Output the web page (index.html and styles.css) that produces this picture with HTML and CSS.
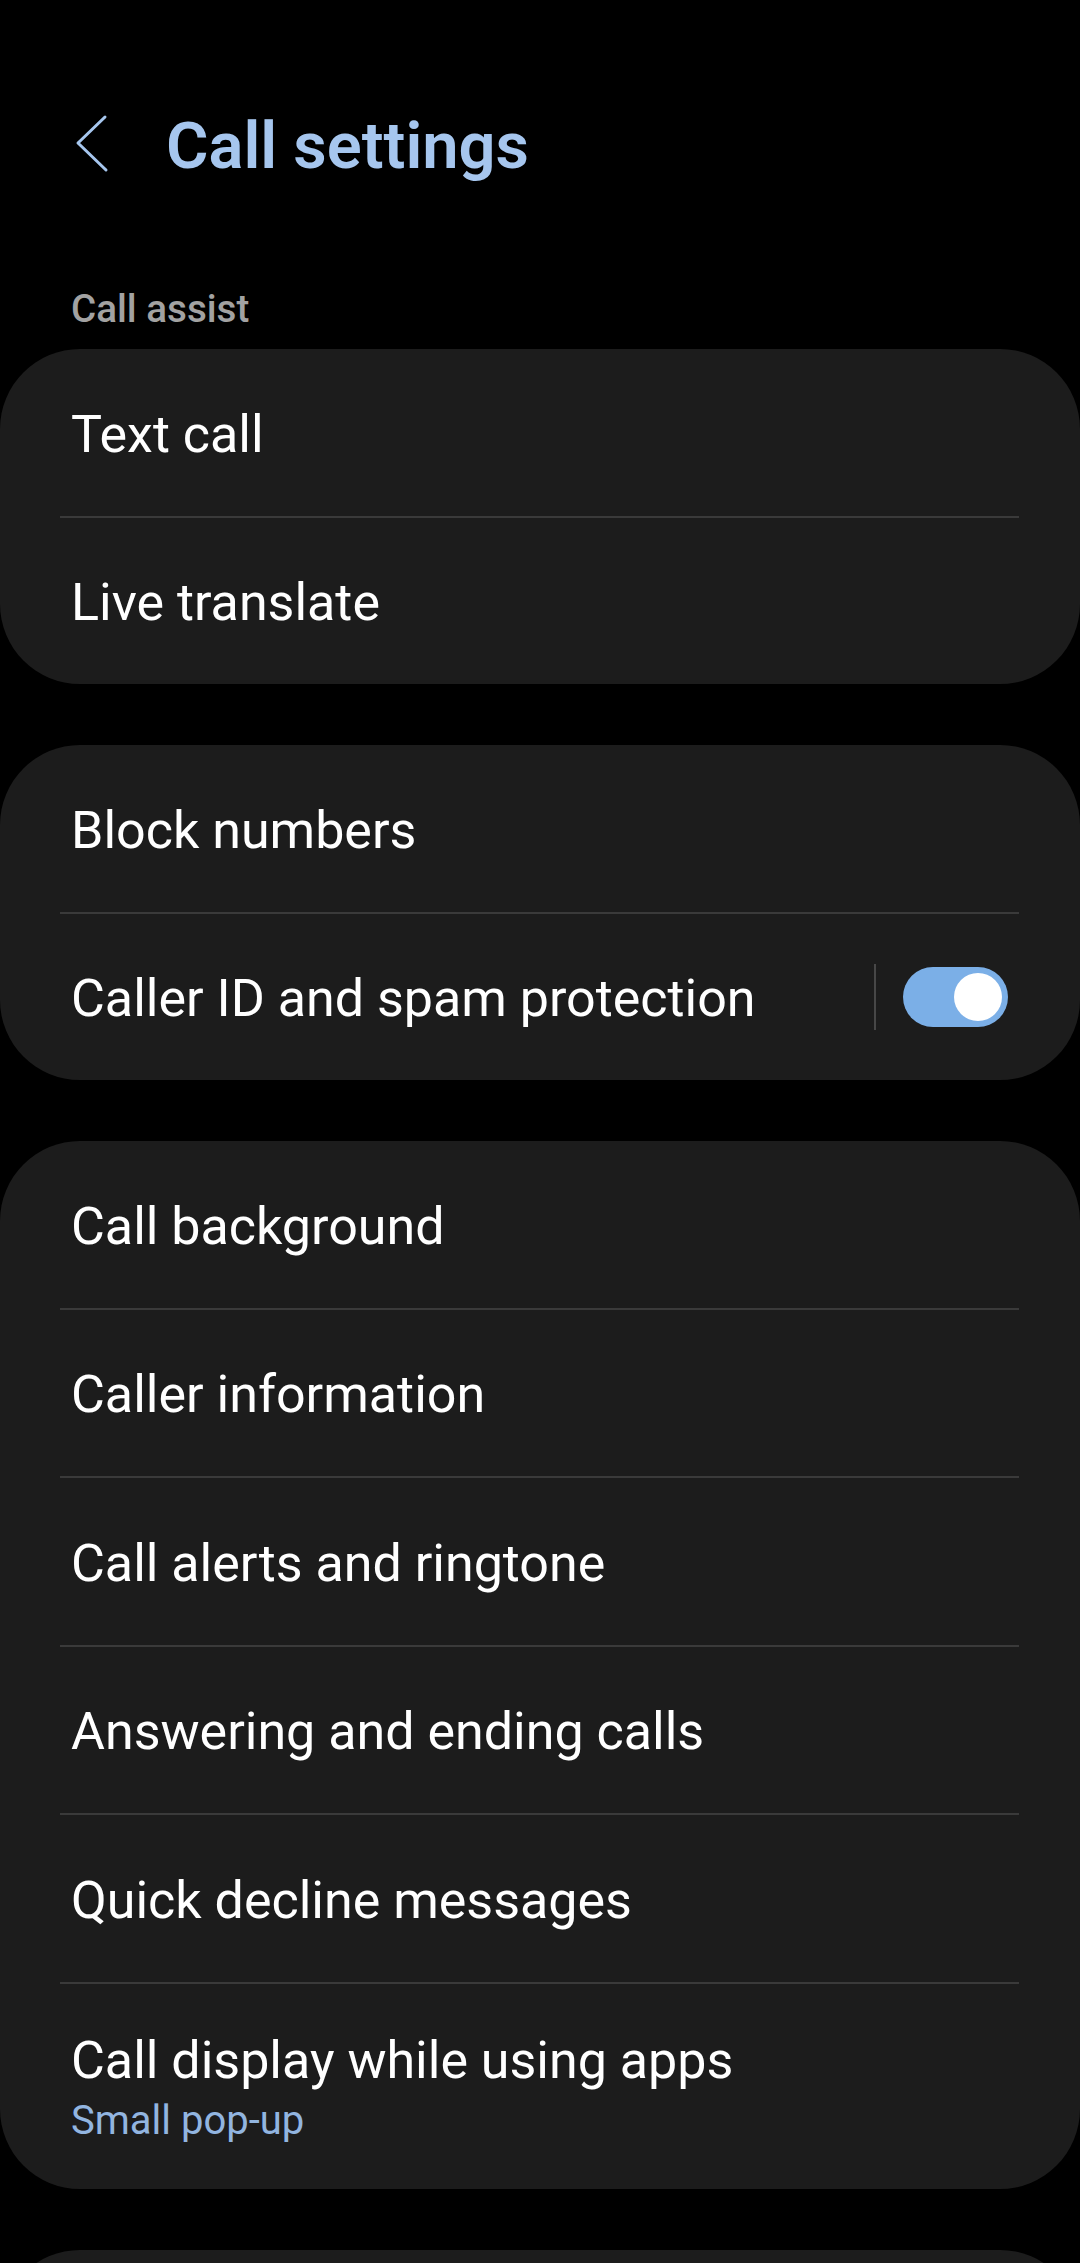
FILE: index.html
```html
<!DOCTYPE html>
<html lang="en">
<head>
    <meta charset="UTF-8">
    <meta name="viewport" content="width=device-width, initial-scale=1.0">
    <title>Call settings</title>
    <link rel="stylesheet" href="styles.css">
</head>
<body>
    <div class="header">
        <svg class="back" width="44" height="60" viewBox="0 0 44 60">
            <path d="M37 4 L10 30 L38 57" fill="none" stroke="#a6c6ee" stroke-width="3" stroke-linecap="round" stroke-linejoin="round"/>
        </svg>
        <h1>Call settings</h1>
    </div>

    <h2 class="section-title">Call assist</h2>

    <div class="card">
        <div class="row">Text call</div>
        <div class="divider"></div>
        <div class="row">Live translate</div>
    </div>

    <div class="card">
        <div class="row">Block numbers</div>
        <div class="divider"></div>
        <div class="row">
            <span class="label">Caller ID and spam protection</span>
            <span class="sep"></span>
            <span class="switch on"><span class="knob"></span></span>
        </div>
    </div>

    <div class="card">
        <div class="row">Call background</div>
        <div class="divider"></div>
        <div class="row">Caller information</div>
        <div class="divider"></div>
        <div class="row">Call alerts and ringtone</div>
        <div class="divider"></div>
        <div class="row">Answering and ending calls</div>
        <div class="divider"></div>
        <div class="row">Quick decline messages</div>
        <div class="divider"></div>
        <div class="row row-two">
            <span class="label">Call display while using apps</span>
            <span class="summary">Small pop-up</span>
        </div>
    </div>

    <div class="card card-more"></div>
</body>
</html>
```

FILE: styles.css
```css
body {
    margin: 0;
    padding: 0;
    background-color: #000;
    color: #fff;
    font-family: Roboto, "Noto Sans", sans-serif;
}

.header {
    display: flex;
    align-items: center;
    height: 110px;
    padding: 88px 0 0 68px;
}

.back {
    display: block;
}

h1 {
    margin: 5px 0 0 54px;
    font-size: 65px;
    line-height: 64px;
    font-weight: 600;
    color: #a6c6ee;
}

.section-title {
    margin: 92px 0 21px 71px;
    font-size: 38.6px;
    line-height: 38px;
    font-weight: 500;
    color: #a2a2a2;
}

.card {
    background-color: #1c1c1c;
    border-radius: 80px;
    margin-bottom: 61px;
    overflow: hidden;
}

.row {
    display: flex;
    align-items: center;
    box-sizing: border-box;
    height: 166.5px;
    padding: 4px 72px 0 71px;
    font-size: 52px;
}

.label {
    flex: 1;
}

.divider {
    height: 2px;
    margin: 0 61px 0 60px;
    background-color: #3a3a3a;
}

.sep {
    width: 2px;
    height: 66px;
    margin: -4px 27px 0 0;
    background-color: #474747;
}

.switch {
    position: relative;
    width: 105px;
    height: 60px;
    margin-top: -4px;
    border-radius: 30px;
    background-color: #505050;
}

.switch.on {
    background-color: #7bafe7;
}

.knob {
    position: absolute;
    top: 6px;
    left: 6px;
    width: 48px;
    height: 48px;
    border-radius: 50%;
    background-color: #fff;
}

.switch.on .knob {
    left: auto;
    right: 6px;
}

.row-two {
    flex-direction: column;
    align-items: flex-start;
    justify-content: flex-start;
    height: auto;
    padding-top: 47px;
    padding-bottom: 38px;
}

.row-two .label {
    line-height: 60px;
}

.summary {
    font-size: 40px;
    line-height: 60px;
    color: #92b5e0;
}

.card-more {
    height: 200px;
}
```
